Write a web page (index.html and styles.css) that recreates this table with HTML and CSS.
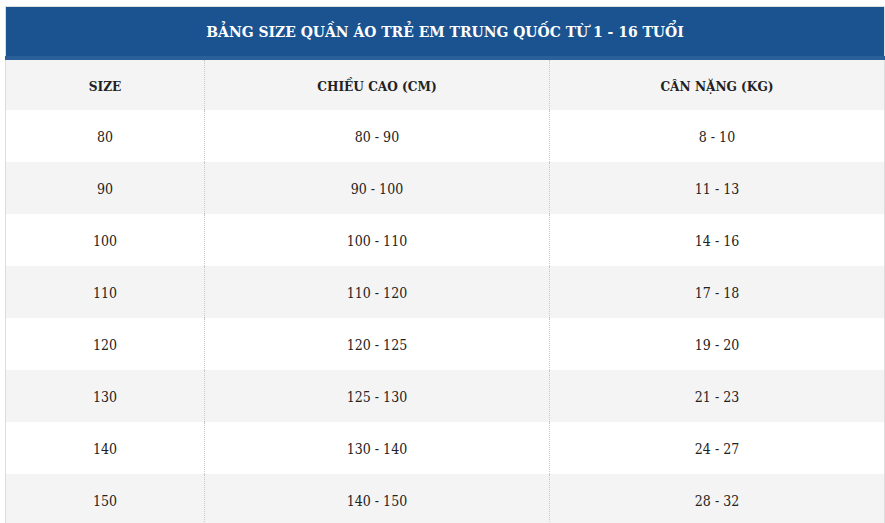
FILE: index.html
```html
<!DOCTYPE html>
<html lang="vi">
<head>
<meta charset="utf-8">
<title>Bảng size quần áo trẻ em</title>
<link rel="stylesheet" href="styles.css">
</head>
<body>
<div class="wrap">
<table class="size-table">
  <colgroup>
    <col class="c1"><col class="c2"><col class="c3">
  </colgroup>
  <thead>
    <tr><th colspan="3" class="title">BẢNG SIZE QUẦN ÁO TRẺ EM TRUNG QUỐC TỪ 1 - 16 TUỔI</th></tr>
    <tr class="head alt"><th>SIZE</th><th>CHIỀU CAO (CM)</th><th>CÂN NẶNG (KG)</th></tr>
  </thead>
  <tbody>
    <tr><td>80</td><td>80 - 90</td><td>8 - 10</td></tr>
    <tr class="alt"><td>90</td><td>90 - 100</td><td>11 - 13</td></tr>
    <tr><td>100</td><td>100 - 110</td><td>14 - 16</td></tr>
    <tr class="alt"><td>110</td><td>110 - 120</td><td>17 - 18</td></tr>
    <tr><td>120</td><td>120 - 125</td><td>19 - 20</td></tr>
    <tr class="alt"><td>130</td><td>125 - 130</td><td>21 - 23</td></tr>
    <tr><td>140</td><td>130 - 140</td><td>24 - 27</td></tr>
    <tr class="alt"><td>150</td><td>140 - 150</td><td>28 - 32</td></tr>
  </tbody>
</table>
</div>
</body>
</html>
```
FILE: styles.css
```css
html, body {
  margin: 0;
  padding: 0;
  background: #ffffff;
}
.wrap {
  padding: 6px 1px 0 5px;
}
.size-table {
  width: 879px;
  border-collapse: collapse;
  table-layout: fixed;
  border-top: 1px solid #dddddd;
  border-left: 1px solid #dddddd;
  border-right: 1px solid #dddddd;
  font-family: "DejaVu Serif Condensed", "DejaVu Serif", "Liberation Serif", serif;
  color: #222222;
}
.c1 { width: 199px; }
.c2 { width: 345px; }
.c3 { width: 335px; }
.size-table th,
.size-table td {
  text-align: center;
  vertical-align: middle;
  padding: 2px 0 0;
  height: 52px;
  box-sizing: border-box;
}
.size-table td + td,
.size-table .head th + th {
  border-left: 1px dotted #c8c8c8;
}
.title {
  background: #1b5391;
  color: #ffffff;
  font-size: 15.5px;
  font-weight: bold;
  border-bottom: 4px solid #2a5f9a;
}
.size-table .title { height: 51px; padding: 0; }
.head th {
  font-size: 13.5px;
  font-weight: bold;
}
.size-table td {
  font-size: 14px;
  font-weight: normal;
}
.alt { background: #f4f4f4; }
```
